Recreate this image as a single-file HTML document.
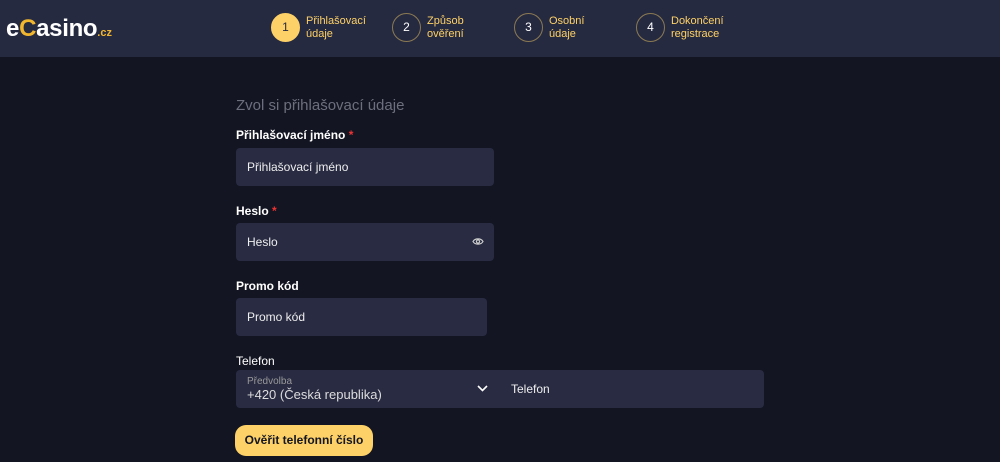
<!DOCTYPE html>
<html><head><meta charset="utf-8"><style>
*{margin:0;padding:0;box-sizing:border-box}
body{width:1000px;height:462px;overflow:hidden;background:#131522;font-family:"Liberation Sans",sans-serif;color:#fff;position:relative}
.hdr{position:absolute;left:0;top:0;width:1000px;height:57px;background:#262a41}
.logo{position:absolute;left:6px;top:15px;font-size:24px;font-weight:bold;letter-spacing:-0.3px}
.logo .c{color:#f1b62e}.logo small{font-size:11px;color:#f1b62e;letter-spacing:0}
.step{position:absolute;top:13px;height:30px}
.circ{position:absolute;left:0;top:0;width:29px;height:29px;border-radius:50%;border:1px solid #8b7a52;color:#fff;font-size:12px;text-align:center;line-height:27px}
.circ.a{background:#fdd167;border-color:#fdd167;color:#262a41}
.st{position:absolute;left:35px;top:2px;font-size:11px;line-height:13px;color:#fdd167;white-space:nowrap}
.lbl{position:absolute;left:236px;font-size:12px;font-weight:bold}
.lbl i{color:#e33;font-style:normal}
.inp{position:absolute;left:236px;background:#282b42;border-radius:4px;height:38px;font-size:12px;padding-left:11px;line-height:38px;color:#eee}
.btn{position:absolute;left:235px;top:425px;width:138px;height:31px;background:#fdd167;border-radius:11px;color:#131522;font-size:12px;font-weight:bold;text-align:center;line-height:31px}
</style></head><body>
<div class="hdr">
<div class="logo">e<span class="c">C</span>asino<small>.cz</small></div>
<div class="step" style="left:271px"><div class="circ a">1</div><div class="st">Přihlašovací<br>údaje</div></div>
<div class="step" style="left:392px"><div class="circ">2</div><div class="st">Způsob<br>ověření</div></div>
<div class="step" style="left:514px"><div class="circ">3</div><div class="st">Osobní<br>údaje</div></div>
<div class="step" style="left:636px"><div class="circ">4</div><div class="st">Dokončení<br>registrace</div></div>
</div>
<div style="position:absolute;left:236px;top:97px;font-size:15px;color:#6d6f7e">Zvol si přihlašovací údaje</div>
<div class="lbl" style="top:128px">Přihlašovací jméno <i>*</i></div>
<div class="inp" style="top:148px;width:258px">Přihlašovací jméno</div>
<div class="lbl" style="top:204px">Heslo <i>*</i></div>
<div class="inp" style="top:223px;width:258px">Heslo
<svg style="position:absolute;right:10px;top:14px" width="12" height="9" viewBox="0 0 12 9"><path d="M1 4.5C3 1 9 1 11 4.5C9 8 3 8 1 4.5Z" fill="none" stroke="#ccc" stroke-width="1.2"/><circle cx="6" cy="4.5" r="1.6" fill="none" stroke="#ccc" stroke-width="1.2"/></svg></div>
<div class="lbl" style="top:279px">Promo kód</div>
<div class="inp" style="top:298px;width:251px">Promo kód</div>
<div class="lbl" style="top:354px;font-weight:normal">Telefon</div>
<div class="inp" style="top:370px;width:528px;height:38px;line-height:normal">
<div style="position:absolute;left:11px;top:6px;font-size:10px;color:#999">Předvolba</div>
<div style="position:absolute;left:11px;top:17px;font-size:13px;color:#ddd">+420 (Česká republika)</div>
<svg style="position:absolute;left:241px;top:15px" width="11" height="7" viewBox="0 0 11 7"><path d="M1 1L5.5 5.5L10 1" fill="none" stroke="#fff" stroke-width="1.6"/></svg>
<div style="position:absolute;left:275px;top:12px;font-size:12px">Telefon</div>
</div>
<div class="btn">Ověřit telefonní číslo</div>
</body></html>
